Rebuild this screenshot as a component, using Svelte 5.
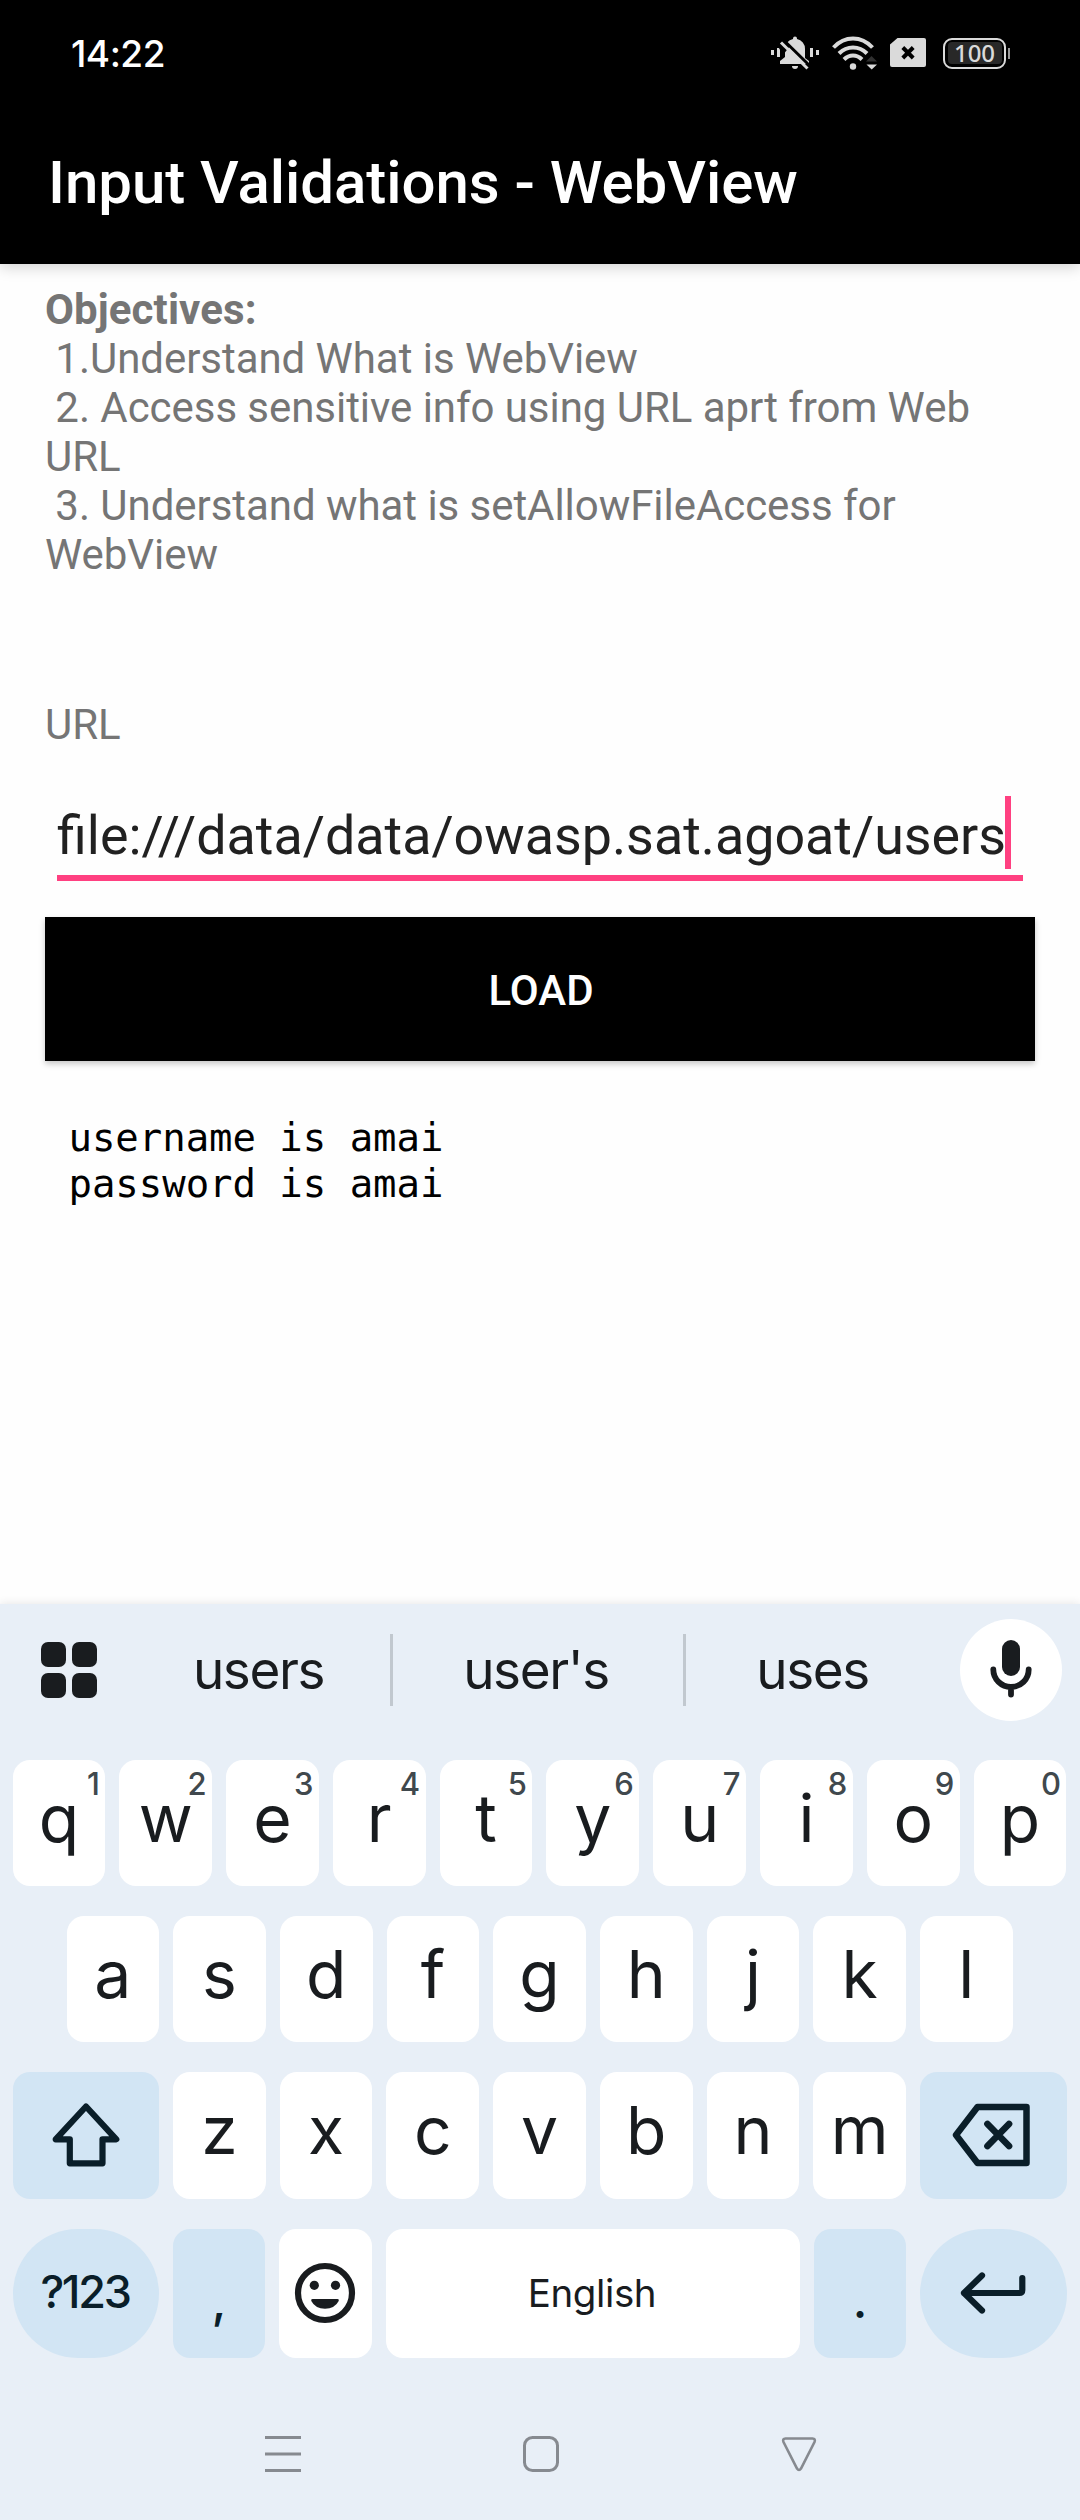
<script>
  const objectives = [
    ' 1.Understand What is WebView',
    ' 2. Access sensitive info using URL aprt from Web\nURL',
    ' 3. Understand what is setAllowFileAccess for\nWebView'
  ];
  const topRow = [...'qwertyuiop'].map((letter, i) => ({ letter, hint: (i + 1) % 10 }));
  const homeRow = [...'asdfghjkl'];
  const bottomRow = [...'zxcvbnm'];
</script>

<div class="phone">
  <header>
    <div class="status">
      <span class="time">14:22</span>
      <div class="indicators">
        <svg class="bell" width="50" height="36" viewBox="0 0 50 36">
          <g fill="#dadada">
            <rect x="1" y="15" width="3" height="5" />
            <rect x="7" y="13" width="3" height="9" />
            <rect x="40" y="13" width="3" height="9" />
            <rect x="46" y="15" width="3" height="5" />
            <path d="M23 4V3.5a2 2 0 0 1 4 0V4a10 10 0 0 1 8 10v9l4 3v3H10v-3l5-4V14A10 10 0 0 1 23 4Z" />
            <path d="M22 31h6a3 3 0 0 1-6 0Z" />
          </g>
          <path d="M12.500 4 40 31" stroke="#000" stroke-width="3" />
          <path d="M4 4.500 12 3 20 11 13 20Z" fill="#000" />
          <path d="M11 7.500 37.500 33.500" stroke="#dadada" stroke-width="3" />
        </svg>
        <svg class="wifi" width="46" height="36" viewBox="0 0 46 36">
          <g fill="none" stroke="#dadada" stroke-width="4">
            <path d="M2.500 12.500Q11 3.500 22 3.500T41.500 12.500" />
            <path d="M8 18.500Q14 12.500 22 12.500T36 18.500" />
            <path d="M13 24.500Q17 20.500 22 20.500T31 24.500" />
          </g>
          <circle cx="22" cy="31.500" r="3.200" fill="#dadada" />
          <path d="M35 26.500 40.500 21 46 26.500Z" fill="#303030" />
          <path d="M35.500 29.500H46L40.700 34.500Z" fill="#dadada" />
        </svg>
        <svg class="sim" width="36" height="30" viewBox="0 0 36 30">
          <path d="M7.500 0H34a2 2 0 0 1 2 2V27a2 2 0 0 1-2 2H2a2 2 0 0 1-2-2V6.500Z" fill="#dadada" />
          <path d="M12.800 9.500 23.200 20M23.200 9.500 12.800 20" stroke="#000" stroke-width="4" />
        </svg>
        <div class="battery"><span>100</span></div>
        <i class="nub"></i>
      </div>
    </div>
    <h1>Input Validations - WebView</h1>
  </header>

  <main>
    <section class="objectives"><b>Objectives:</b>{#each objectives as line}<p>{line}</p>{/each}</section>
    <label for="url">URL</label>
    <div class="field" id="url"><span>file:///data/data/owasp.sat.agoat/users</span><i class="caret"></i></div>
    <button class="load">LOAD</button>
    <pre>username is amai
password is amai</pre>
  </main>

  <section class="keyboard">
    <div class="strip">
      <svg class="grid" width="56" height="56" viewBox="0 0 56 56" fill="#191c1f">
        <rect width="25" height="25" rx="7" />
        <rect x="31" width="25" height="25" rx="7" />
        <rect y="31" width="25" height="25" rx="7" />
        <rect x="31" y="31" width="25" height="25" rx="7" />
      </svg>
      <span class="word first">users</span>
      <span class="word middle">user's</span>
      <span class="word last">uses</span>
      <div class="mic">
        <svg width="102" height="102" viewBox="0 0 102 102">
          <rect x="42" y="21" width="18" height="36" rx="9" fill="#191c1f" />
          <path d="M33.300 50.500a17.700 17.500 0 0 0 35.400 0M51 69V75.500" fill="none" stroke="#191c1f" stroke-width="5.800" stroke-linecap="round" />
        </svg>
      </div>
    </div>

    <div class="row first-row">
      {#each topRow as key}
        <div class="key">{key.letter}<sup>{key.hint}</sup></div>
      {/each}
    </div>
    <div class="row home">
      {#each homeRow as letter}
        <div class="key">{letter}</div>
      {/each}
    </div>
    <div class="row third">
      <div class="key fn wide">
        <svg width="70" height="70" viewBox="0 0 70 70">
          <path d="M35 6.500 65.300 39.300H51.500V63.300H18.800V39.300H4.700Z" fill="none" stroke="#0a1e29" stroke-width="6.200" stroke-linejoin="round" />
        </svg>
      </div>
      {#each bottomRow as letter}
        <div class="key">{letter}</div>
      {/each}
      <div class="key fn wide end">
        <svg class="erase" width="80" height="70" viewBox="0 0 80 70" fill="none" stroke="#0a1e29" stroke-linejoin="round" stroke-linecap="round">
          <path d="M5 35 26.500 7H75.500V63H26.500Z" stroke-width="6.500" />
          <path d="M36.500 24 58 46M58 24 36.500 46" stroke-width="6.700" />
        </svg>
      </div>
    </div>
    <div class="row fourth">
      <div class="key fn wide round symbols">?123</div>
      <div class="key fn comma">,</div>
      <div class="key">
        <svg width="62" height="62" viewBox="0 0 62 62" fill="#191c1f">
          <circle cx="31" cy="31" r="27" fill="none" stroke="#191c1f" stroke-width="6.200" />
          <circle cx="20.300" cy="23.300" r="4.600" />
          <circle cx="41.500" cy="23.300" r="4.600" />
          <path d="M18.500 37H43.500Q45.400 37 44.700 39A15 13 0 0 1 17.300 39Q16.600 37 18.500 37Z" />
        </svg>
      </div>
      <div class="key space">English</div>
      <div class="key fn period">.</div>
      <div class="key fn wide end round">
        <svg width="70" height="50" viewBox="0 0 70 50" fill="none" stroke="#0a1e29" stroke-width="6.200" stroke-linecap="round" stroke-linejoin="round">
          <path d="M64.300 10V22Q64.300 25 61.300 25H6M24 7.500 6 25 24 42.500" />
        </svg>
      </div>
    </div>

    <nav>
      <svg width="36" height="36" viewBox="0 0 36 36"><path d="M0 1.500H36M0 18H36M0 34.500H36" stroke="#868a90" stroke-width="3" /></svg>
      <svg width="36" height="36" viewBox="0 0 36 36"><rect x="1.500" y="1.500" width="33" height="33" rx="8" fill="none" stroke="#868a90" stroke-width="3" /></svg>
      <svg width="36" height="36" viewBox="0 0 36 36"><path d="M4.500 2.500H31.500Q34.800 2.500 33.500 6L20 32.500Q18 35.500 16 32.500L2.500 6Q1.200 2.500 4.500 2.500Z" fill="none" stroke="#868a90" stroke-width="2.600" /></svg>
    </nav>
  </section>
</div>

<style>
  :global(body) { margin: 0; }
  .phone {
    width: 1080px;
    height: 2520px;
    display: flex;
    flex-direction: column;
    background: #fefefe;
    font-family: Roboto, sans-serif;
    overflow: hidden;
  }
  header {
    height: 264px;
    box-sizing: border-box;
    background: #000;
    color: #fff;
    box-shadow: 0 3px 14px rgba(0, 0, 0, 0.18);
  }
  .status {
    height: 107px;
    box-sizing: border-box;
    padding: 0 70px 0 71px;
    display: flex;
    justify-content: space-between;
    align-items: center;
  }
  .time { font: 500 37px/44px Inter, sans-serif; letter-spacing: -0.500px; }
  .indicators { display: flex; align-items: center; margin-top: -1px; }
  .wifi { margin-left: 11px; }
  .sim { margin-left: 13px; }
  .battery {
    width: 63px;
    height: 31px;
    margin-left: 17px;
    box-sizing: border-box;
    border: 2.500px solid #dadada;
    border-radius: 9px;
    padding: 2.500px;
    display: flex;
  }
  .battery span {
    flex: 1;
    border-radius: 4px;
    background: #282828;
    color: #dadada;
    text-align: center;
    font: 500 24px/21px "Noto Sans", sans-serif;
  }
  .nub { width: 2px; height: 11px; margin-left: 2px; background: #999; }
  h1 {
    margin: 41px 0 0 48px;
    font-size: 60px;
    line-height: 70px;
    font-weight: 500;
    letter-spacing: -0.050px;
    white-space: nowrap;
  }
  main {
    height: 1340px;
    box-sizing: border-box;
    padding: 21px 45px 0;
    display: flex;
    flex-direction: column;
    font-size: 42px;
    line-height: 49px;
    color: #757575;
  }
  .objectives { height: 415px; white-space: pre; }
  .objectives b { display: block; letter-spacing: 0.100px; }
  .objectives p { margin: 0; letter-spacing: -0.050px; }
  .field {
    height: 85px;
    margin: 47px 12px 0;
    box-sizing: border-box;
    border-bottom: 6px solid #ff4081;
    display: flex;
    align-items: flex-start;
    color: #212121;
    font-size: 53.800px;
    line-height: 79px;
    white-space: nowrap;
  }
  .caret { width: 6px; height: 73px; margin-left: -1px; background: #ff4081; }
  .load {
    height: 144px;
    margin: 36px 0 0;
    padding: 3px 0 0 2px;
    border: 0;
    background: #000;
    color: #fff;
    font: 500 42px/49px Roboto, sans-serif;
    box-shadow: 0 3px 6px rgba(0, 0, 0, 0.22);
  }
  pre {
    margin: 54px 0 0 23.500px;
    font: 39px/46px "DejaVu Sans Mono", monospace;
    letter-spacing: -0.050px;
    color: #000;
  }
  .keyboard {
    flex: 1;
    display: flex;
    flex-direction: column;
    background: #e8eff7;
    color: #191c1f;
    font-family: Inter, sans-serif;
    box-shadow: 0 0 9px rgba(0, 0, 0, 0.11);
  }
  .strip { height: 132px; display: flex; align-items: center; margin-bottom: 24px; }
  .grid { margin: 0 34px 0 41px; }
  .word {
    height: 72px;
    box-sizing: border-box;
    padding-right: 4px;
    line-height: 72px;
    font-size: 53px;
    letter-spacing: -1.400px;
    text-align: center;
  }
  .first { width: 262px; border-right: 3px solid #c1c8cf; }
  .middle { width: 293px; border-right: 3px solid #c1c8cf; }
  .last { width: 257px; }
  .mic { width: 102px; height: 102px; margin-left: 17px; border-radius: 50%; background: #fff; }
  .mic svg { display: block; }
  .row { height: 126px; padding: 0 13px; display: flex; gap: 14px; margin-bottom: 30px; }
  .first-row { padding: 0 13.500px 0 12.500px; }
  .home { padding: 0 67.300px 0 66.500px; }
  .third { height: 127px; }
  .fourth { height: 129px; margin-bottom: 78px; }
  .key {
    position: relative;
    flex: 1;
    display: flex;
    align-items: center;
    justify-content: center;
    padding: 0 0 11px;
    box-sizing: border-box;
    border-radius: 17px;
    background: #fff;
    font-size: 66px;
    line-height: 80px;
  }
  .key:has(svg) { padding: 0 1px 1px 0; }
  .key svg { display: block; flex: none; }
  .key sup {
    position: absolute;
    top: 5px;
    right: 6px;
    font-size: 31px;
    line-height: 38px;
    font-weight: 500;
    letter-spacing: -0.500px;
    color: #40484d;
  }
  .fn { background: #d2e5f4; color: #0a1e29; }
  .wide { flex: 0 0 146px; }
  .end { flex-basis: 147px; }
  .erase { margin-left: -4px; }
  .round { border-radius: 65px; }
  .symbols { padding: 0 2px 3px 0; font-size: 45px; font-weight: 500; letter-spacing: -2.300px; }
  .comma, .period { padding: 16px 0 1px; font-size: 48px; font-weight: 500; }
  .space { flex: 0 0 414px; padding: 0 2px 2px 0; font-size: 38.500px; letter-spacing: -0.400px; }
  nav { display: flex; justify-content: space-between; padding: 0 263px 0 265px; }
</style>
